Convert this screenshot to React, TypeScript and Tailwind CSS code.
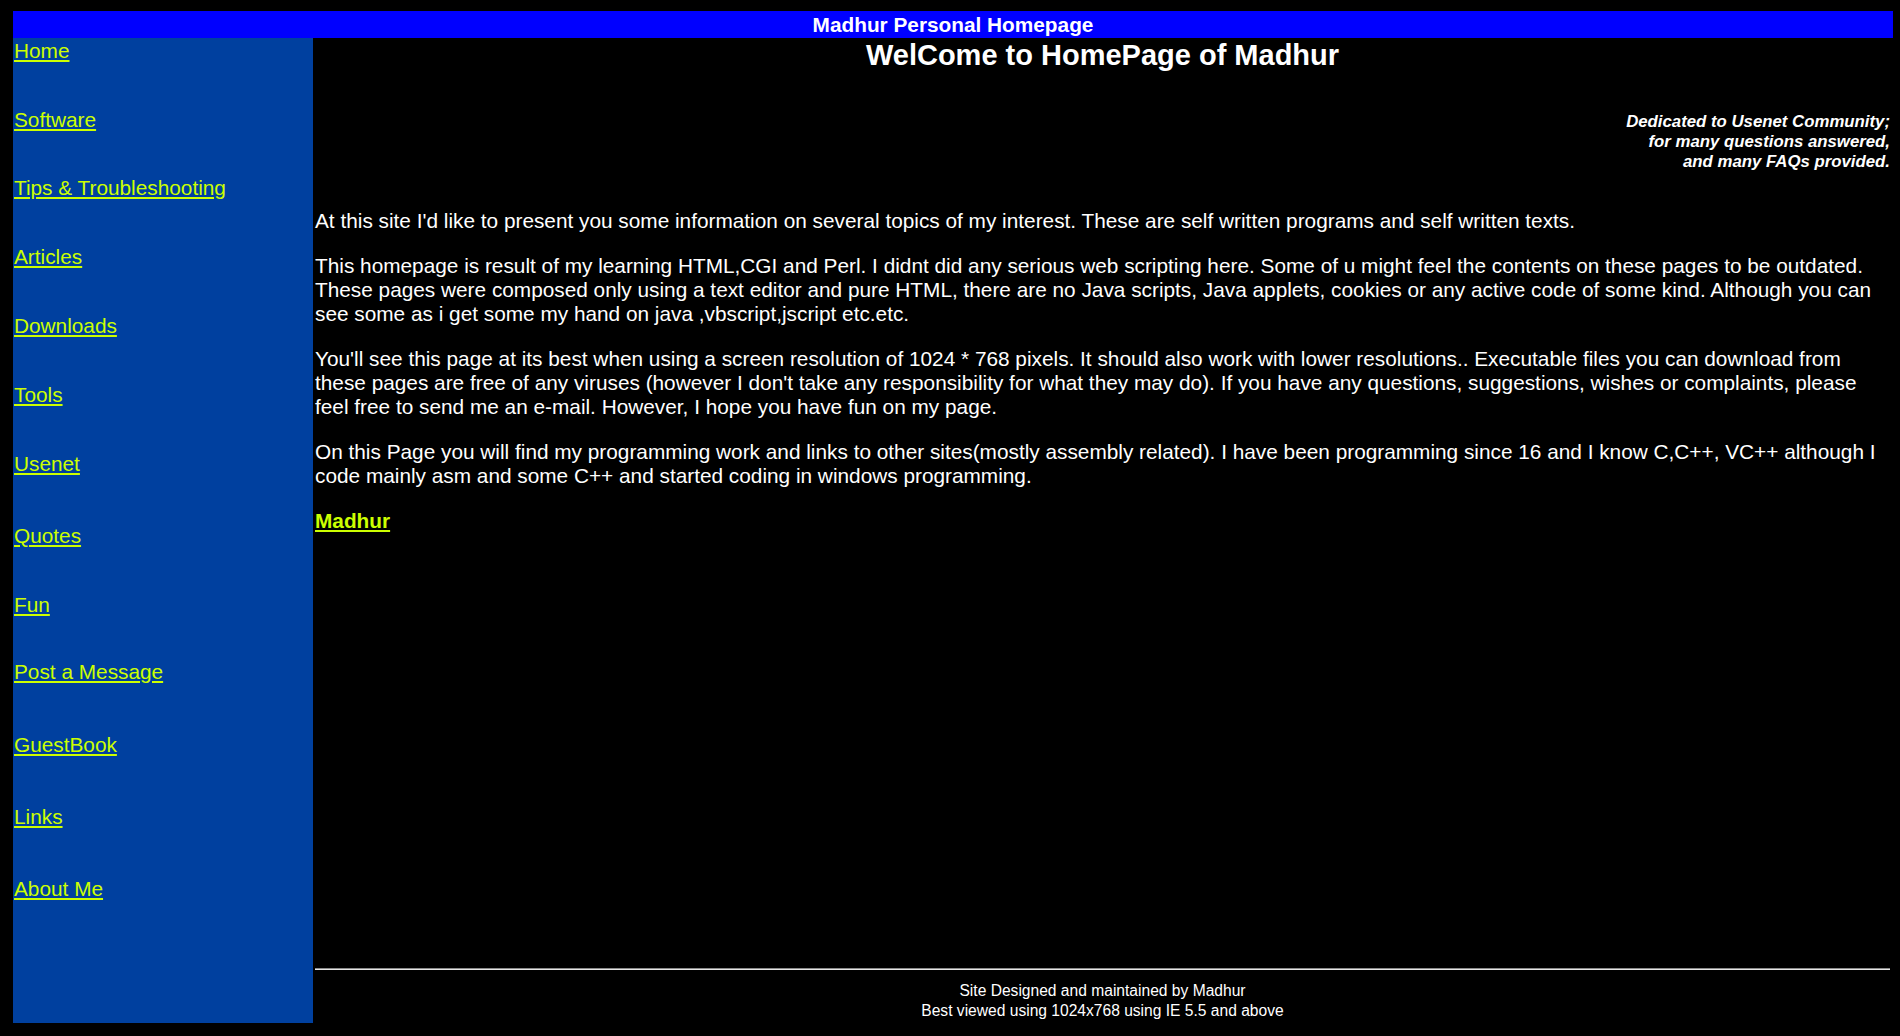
import React from 'react';

interface NavLink {
  label: string;
  rowClass: string;
}

const navLinks: NavLink[] = [
  { label: 'Home', rowClass: 'h-[69px]' },
  { label: 'Software', rowClass: 'h-[68px]' },
  { label: 'Tips & Troubleshooting', rowClass: 'h-[69px]' },
  { label: 'Articles', rowClass: 'h-[69px]' },
  { label: 'Downloads', rowClass: 'h-[69px]' },
  { label: 'Tools', rowClass: 'h-[69px]' },
  { label: 'Usenet', rowClass: 'h-[72px]' },
  { label: 'Quotes', rowClass: 'h-[69px]' },
  { label: 'Fun', rowClass: 'h-[67px]' },
  { label: 'Post a Message', rowClass: 'h-[73px]' },
  { label: 'GuestBook', rowClass: 'h-[72px]' },
  { label: 'Links', rowClass: 'h-[72px]' },
  { label: 'About Me', rowClass: 'h-[24px]' },
];

const Sidebar: React.FC = () => {
  return (
    <div className="w-[300px] shrink-0 bg-[#00409f] pl-[1px] pt-[1px]">
      {navLinks.map((link, index) => (
        <div key={index} className={link.rowClass}>
          <a href="#" className="text-[20.8px] leading-[24px] text-[#ccff00] underline">
            {link.label}
          </a>
        </div>
      ))}
    </div>
  );
};

const App: React.FC = () => {
  return (
    <div
      className="min-h-screen bg-black pt-[11px] pl-[13px] pr-[7px] text-white"
      style={{ fontFamily: '"Liberation Sans", Arial, sans-serif' }}
    >
      <div className="h-[27px] bg-[#0000ff] flex items-center justify-center">
        <span className="text-[20.8px] leading-[24px] font-bold">Madhur Personal Homepage</span>
      </div>
      <div className="flex h-[985px]">
        <Sidebar />
        <div className="flex-1 flex flex-col pl-[2px] pr-[3px]">
          <h1 className="mt-[1px] text-center text-[29px] leading-[33px] font-bold">
            WelCome to HomePage of Madhur
          </h1>
          <p className="mt-[40px] text-right text-[16.8px] leading-[20px] font-bold italic">
            Dedicated to Usenet Community;
            <br />
            for many questions answered,
            <br />
            and many FAQs provided.
          </p>
          <div className="mt-[37px] flex flex-col gap-[21px] text-[20.8px] leading-[24px]">
            <p>
              At this site I'd like to present you some information on several topics of my interest. These are self
              written programs and self written texts.
            </p>
            <p>
              This homepage is result of my learning HTML,CGI and Perl. I didnt did any serious web scripting here. Some
              of u might feel the contents on these pages to be outdated. These pages were composed only using a text
              editor and pure HTML, there are no Java scripts, Java applets, cookies or any active code of some kind.
              Although you can see some as i get some my hand on java ,vbscript,jscript etc.etc.
            </p>
            <p>
              You'll see this page at its best when using a screen resolution of 1024 * 768 pixels. It should also work
              with lower resolutions.. Executable files you can download from these pages are free of any viruses
              (however I don't take any responsibility for what they may do). If you have any questions, suggestions,
              wishes or complaints, please feel free to send me an e-mail. However, I hope you have fun on my page.
            </p>
            <p>
              On this Page you will find my programming work and links to other sites(mostly assembly related). I have
              been programming since 16 and I know C,C++, VC++ although I code mainly asm and some C++ and started
              coding in windows programming.
            </p>
            <p>
              <a href="#" className="font-bold text-[#ccff00] underline">
                Madhur
              </a>
            </p>
          </div>
          <div className="mt-auto">
            <div className="h-[2px] border-t border-t-[#8a8a8a] border-b border-b-[#e6e6e6] bg-[#cfcfcf]" />
            <div className="mt-[11px] mb-[2px] text-center text-[15.6px] leading-[20px]">
              Site Designed and maintained by Madhur
              <br />
              Best viewed using 1024x768 using IE 5.5 and above
            </div>
          </div>
        </div>
      </div>
    </div>
  );
};

export default App;
